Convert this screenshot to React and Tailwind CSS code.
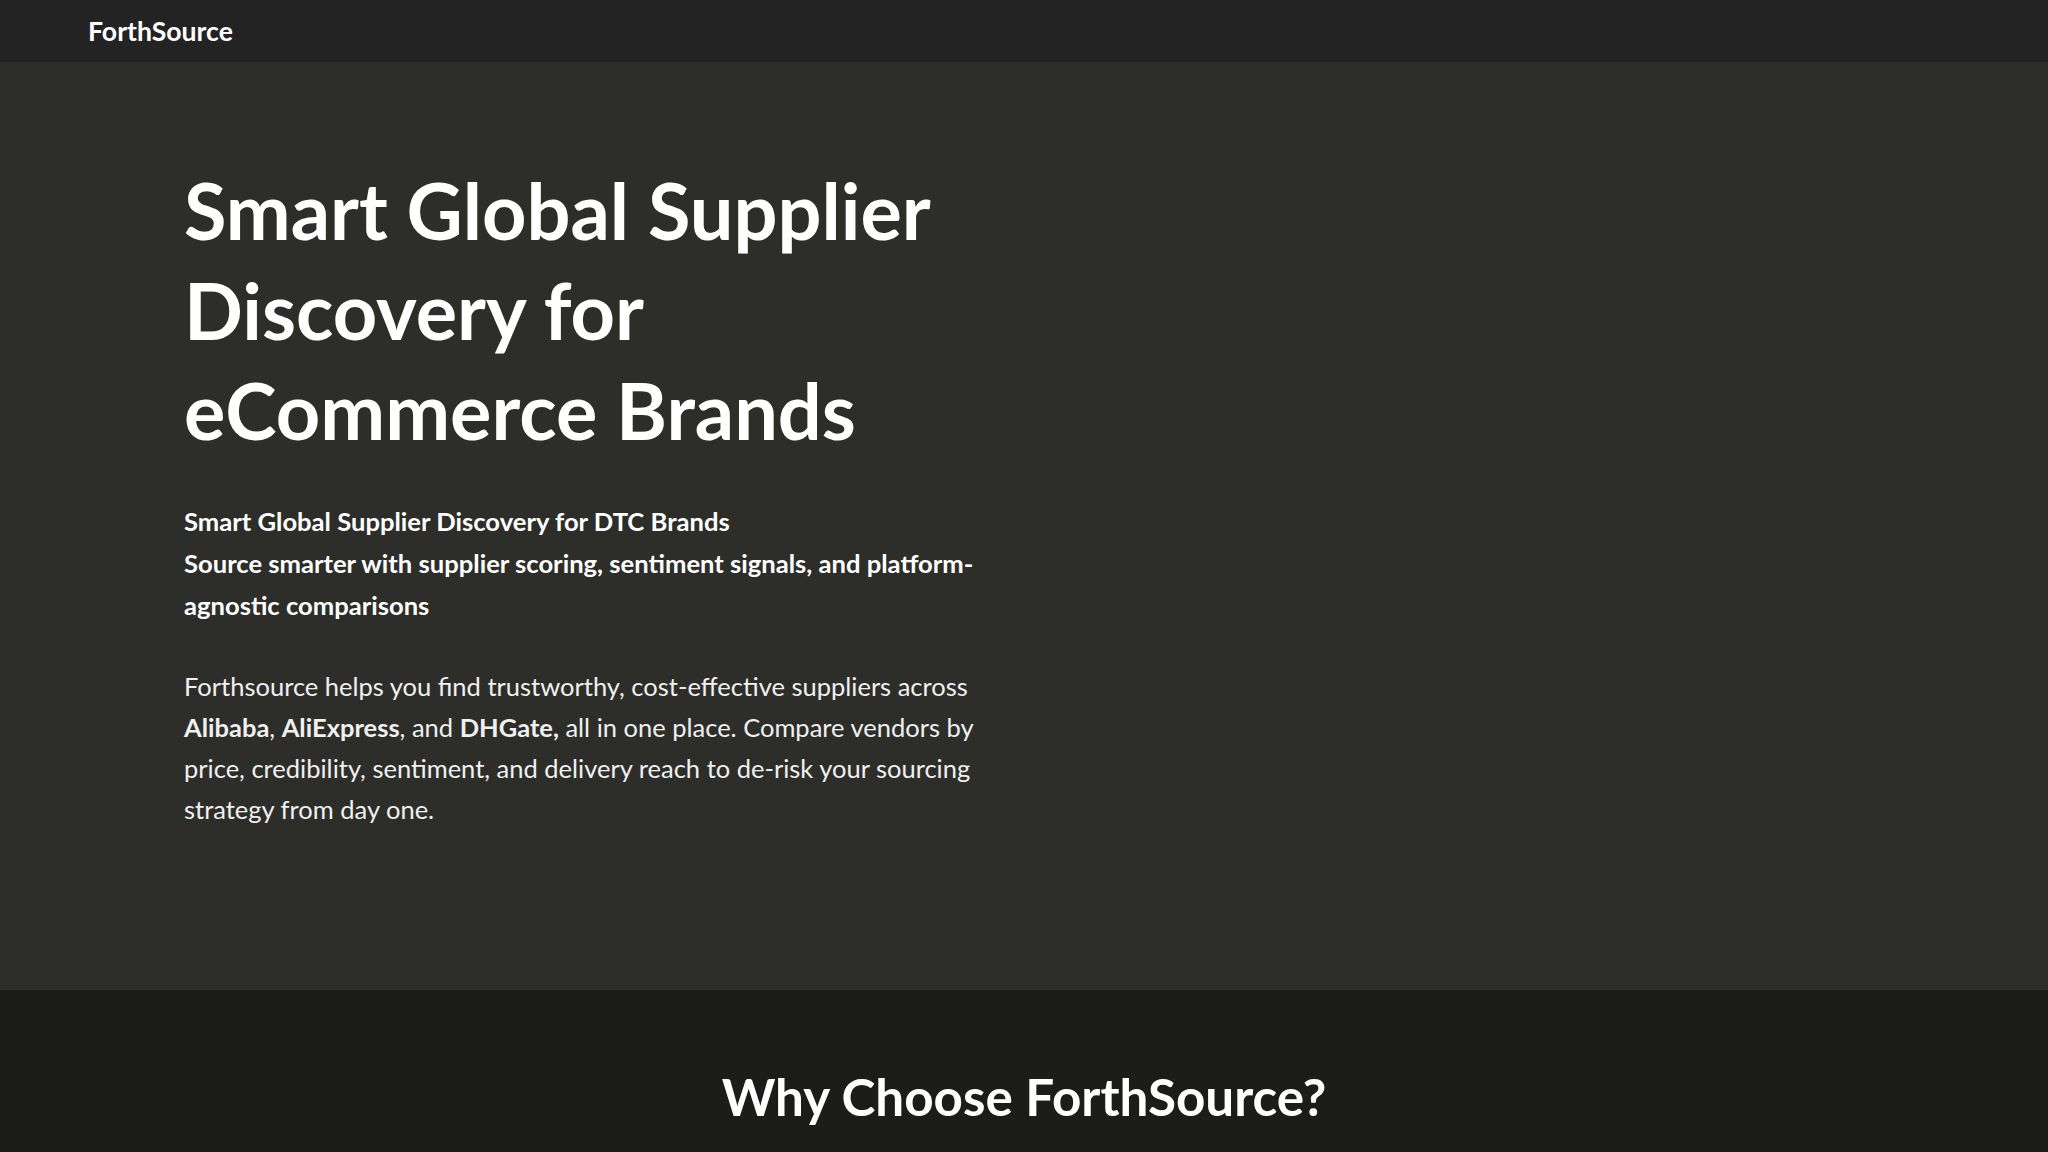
export default function App() {
  return (
    <div className="min-h-screen bg-[#1c1d1a] text-white" style={{ fontFamily: 'Lato, "Noto Sans", sans-serif' }}>
      <header className="h-[62px] bg-[#232323] flex items-center px-[88px]">
        <span className="text-[26.6px] font-bold leading-none">ForthSource</span>
      </header>
      <section className="bg-[#2d2e2a] pl-[184px] pt-[99px] pb-[160px]">
        <div className="max-w-[820px]">
          <h1 className="text-[77.5px] font-bold leading-[100px]">Smart Global Supplier Discovery for eCommerce Brands</h1>
          <p className="mt-[39px] text-[25.6px] font-bold leading-[42px]">
            Smart Global Supplier Discovery for DTC Brands
            <br />
            Source smarter with supplier scoring, sentiment signals, and platform-agnostic comparisons
          </p>
          <p className="mt-[40px] text-[25.5px] leading-[41px] text-[#f0f0f0]">
            Forthsource helps you find trustworthy, cost-effective suppliers across <strong>Alibaba</strong>, <strong>AliExpress</strong>, and <strong>DHGate,</strong> all in one place. Compare vendors by price, credibility, sentiment, and delivery reach to de-risk your sourcing strategy from day one.
          </p>
        </div>
      </section>
      <section className="bg-[#1c1d1a] pt-[77px] pb-[80px]">
        <h2 className="text-center text-[51.2px] font-bold leading-[58px]">Why Choose ForthSource?</h2>
      </section>
    </div>
  );
}
